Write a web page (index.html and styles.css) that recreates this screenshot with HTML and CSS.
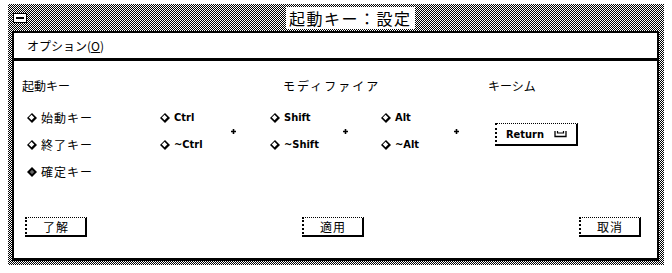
FILE: index.html
```html
<!DOCTYPE html>
<html lang="ja">
<head>
<meta charset="utf-8">
<title>起動キー：設定</title>
<link rel="stylesheet" href="styles.css">
</head>
<body>
<div class="frame">
  <div class="titlebar">
    <span class="winmenu"><span class="winmenu-bar"></span></span>
    <span class="title">起動キー：設定</span>
  </div>
  <div class="client">
    <div class="menubar"><span class="menu">オプション(<u>O</u>)</span></div>
    <div class="body">
      <div class="headers">
        <span class="h h1">起動キー</span>
        <span class="h h2">モディファイア</span>
        <span class="h h3">キーシム</span>
      </div>
      <div class="options">
        <div class="col keys">
          <div class="opt"><svg class="dia" viewBox="0 0 11 11"><polygon points="5.5,0 11,5.5 5.5,11 0,5.5" fill="#000"/><polygon points="5,2 8,5 5,8 2,5" fill="#fff"/></svg><span class="jp">始動キー</span></div>
          <div class="opt"><svg class="dia" viewBox="0 0 11 11"><polygon points="5.5,0 11,5.5 5.5,11 0,5.5" fill="#000"/><polygon points="5,2 8,5 5,8 2,5" fill="#fff"/></svg><span class="jp">終了キー</span></div>
          <div class="opt"><svg class="dia" viewBox="0 0 11 11"><polygon points="5.5,0 11,5.5 5.5,11 0,5.5" fill="#000"/><polygon points="5.5,3 8,5.5 5.5,8 3,5.5" fill="#666"/></svg><span class="jp">確定キー</span></div>
        </div>
        <div class="col ctrl">
          <div class="opt"><svg class="dia" viewBox="0 0 11 11"><polygon points="5.5,0 11,5.5 5.5,11 0,5.5" fill="#000"/><polygon points="5,2 8,5 5,8 2,5" fill="#fff"/></svg><span class="en">Ctrl</span></div>
          <div class="opt"><svg class="dia" viewBox="0 0 11 11"><polygon points="5.5,0 11,5.5 5.5,11 0,5.5" fill="#000"/><polygon points="5,2 8,5 5,8 2,5" fill="#fff"/></svg><span class="en">~Ctrl</span></div>
        </div>
        <div class="plus p1"><svg viewBox="0 0 5 5" class="plus-ic"><path d="M2.5 0v5M0 2.5h5" stroke="#000" stroke-width="1.6"/></svg></div>
        <div class="col shift">
          <div class="opt"><svg class="dia" viewBox="0 0 11 11"><polygon points="5.5,0 11,5.5 5.5,11 0,5.5" fill="#000"/><polygon points="5,2 8,5 5,8 2,5" fill="#fff"/></svg><span class="en">Shift</span></div>
          <div class="opt"><svg class="dia" viewBox="0 0 11 11"><polygon points="5.5,0 11,5.5 5.5,11 0,5.5" fill="#000"/><polygon points="5,2 8,5 5,8 2,5" fill="#fff"/></svg><span class="en">~Shift</span></div>
        </div>
        <div class="plus p2"><svg viewBox="0 0 5 5" class="plus-ic"><path d="M2.5 0v5M0 2.5h5" stroke="#000" stroke-width="1.6"/></svg></div>
        <div class="col alt">
          <div class="opt"><svg class="dia" viewBox="0 0 11 11"><polygon points="5.5,0 11,5.5 5.5,11 0,5.5" fill="#000"/><polygon points="5,2 8,5 5,8 2,5" fill="#fff"/></svg><span class="en">Alt</span></div>
          <div class="opt"><svg class="dia" viewBox="0 0 11 11"><polygon points="5.5,0 11,5.5 5.5,11 0,5.5" fill="#000"/><polygon points="5,2 8,5 5,8 2,5" fill="#fff"/></svg><span class="en">~Alt</span></div>
        </div>
        <div class="plus p3"><svg viewBox="0 0 5 5" class="plus-ic"><path d="M2.5 0v5M0 2.5h5" stroke="#000" stroke-width="1.6"/></svg></div>
        <div class="col keysym">
          <div class="btn ret"><span class="en">Return</span><svg class="ret-ic" viewBox="0 0 13 8"><path d="M1 1v5.5h11V1" fill="none" stroke="#000" stroke-width="1.3"/><path d="M3.5 1v2h6V1" fill="none" stroke="#000" stroke-width="1.2"/></svg></div>
        </div>
      </div>
      <div class="buttons">
        <div class="btn act">了解</div>
        <div class="btn act">適用</div>
        <div class="btn act">取消</div>
      </div>
    </div>
  </div>
</div>
</body>
</html>
```
FILE: styles.css
```css
* { box-sizing: border-box; }
html, body { margin: 0; padding: 0; background: #fff; }
body {
  width: 672px;
  height: 273px;
  overflow: hidden;
  font-family: "Noto Sans CJK JP", sans-serif;
  color: #000;
}
.frame {
  margin: 4px 0 0 8px;
  width: 656px;
  height: 261px;
  padding: 0 5px 4px 4px;
  background: repeating-conic-gradient(#000 0% 25%, #fff 0% 50%) 0 0 / 2px 2px;
  display: flex;
  flex-direction: column;
}
.titlebar {
  height: 27px;
  flex: none;
  display: flex;
  align-items: center;
}
.winmenu {
  width: 14px;
  height: 10px;
  border: 1px solid #000;
  background: #fff;
  margin-left: 1px;
  display: flex;
  align-items: center;
  padding: 0 2px;
}
.winmenu-bar {
  display: block;
  width: 100%;
  height: 2px;
  background: #000;
}
.title {
  margin-left: 259px;
  background: #fff;
  font-size: 16px;
  letter-spacing: 1.5px;
  padding: 0 3px;
  height: 22px;
  line-height: 22px;
  white-space: nowrap;
}
.client {
  flex: 1;
  background: #fff;
  border: 2px solid #000;
  border-bottom-width: 3px;
  display: flex;
  flex-direction: column;
}
.menubar {
  height: 28px;
  flex: none;
  display: flex;
  align-items: center;
  padding-left: 13px;
  border-bottom: 3px solid #000;
  font-size: 12px;
}
.menu u { text-decoration-thickness: 1px; }
.body {
  flex: 1;
  padding: 18px 16px 0 8px;
  display: flex;
  flex-direction: column;
}
.headers {
  display: grid;
  grid-template-columns: 261px 205px auto;
  height: 14px;
  line-height: 14px;
  font-size: 12px;
}
.h2 { letter-spacing: 2px; }
.options {
  margin-top: 11px;
  padding-left: 5px;
  display: flex;
}
.col { display: flex; flex-direction: column; }
.keys { width: 133px; }
.ctrl { width: 66px; }
.shift { width: 68px; }
.alt { width: 68px; }
.opt {
  height: 27px;
  display: flex;
  align-items: center;
  gap: 4px;
}
.dia { width: 10px; height: 10px; flex: none; }
.jp { font-size: 12px; letter-spacing: 1px; }
.en {
  font-family: "DejaVu Sans Condensed", "DejaVu Sans", sans-serif;
  font-weight: bold;
  font-size: 11px;
}
.plus {
  width: 14px;
  height: 54px;
  display: flex;
  align-items: center;
  justify-content: center;
}
.p1 { margin-right: 30px; }
.p2 { margin-right: 29px; }
.p3 { margin-right: 32px; }
.plus-ic { width: 5px; height: 5px; }
.keysym { padding-top: 19px; }
.btn {
  border-top: 1px dotted #000;
  border-left: 2px dotted #000;
  border-right: 2px solid #000;
  border-bottom: 2px solid #000;
  background: #fff;
  display: flex;
  align-items: center;
  justify-content: center;
}
.ret {
  width: 83px;
  height: 23px;
  gap: 10px;
}
.ret-ic { width: 13px; height: 8px; }
.buttons {
  margin-top: 32px;
  padding-left: 3px;
  display: flex;
  justify-content: space-between;
}
.act {
  width: 62px;
  height: 20px;
  font-size: 12px;
  letter-spacing: 1px;
}
```
